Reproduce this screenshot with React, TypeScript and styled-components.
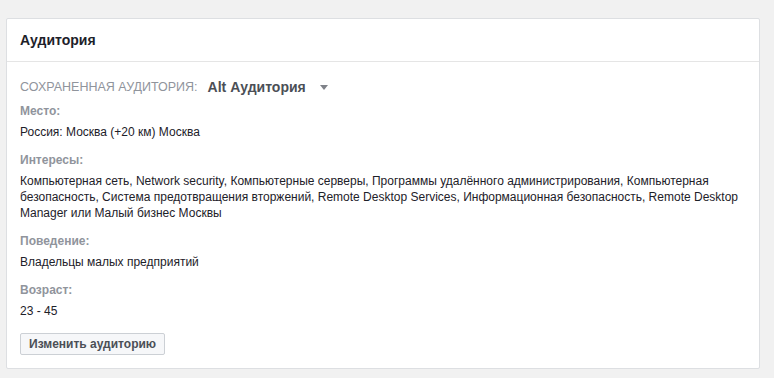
import React from "react";
import styled, { createGlobalStyle } from "styled-components";

const Global = createGlobalStyle`
  html, body { margin: 0; padding: 0; background: #f1f1f1; }
  body { font-family: "Liberation Sans", Arial, Helvetica, sans-serif; -webkit-font-smoothing: antialiased; }
`;

const Page = styled.div`
  padding: 18px 14px 12px 6px;
  width: 774px;
  box-sizing: border-box;
`;

const Card = styled.section`
  background: #fff;
  border: 1px solid #dddfe2;
  border-radius: 2px;
  box-sizing: border-box;
`;

const Header = styled.header`
  height: 42px;
  display: flex;
  align-items: center;
  padding: 0 13px;
  border-bottom: 1px solid #e5e5e5;
  font-size: 14px;
  font-weight: bold;
  color: #1d2129;
`;

const Body = styled.div`
  padding: 15px 13px 13px;
  display: flex;
  flex-direction: column;
`;

const SavedRow = styled.div`
  display: flex;
  align-items: center;
  height: 20px;
  margin-bottom: 6px;
`;

const SavedLabel = styled.span`
  font-size: 12.5px;
  color: #90949c;
  text-transform: uppercase;
  margin-right: 10px;
`;

const SavedValue = styled.span`
  font-size: 14px;
  font-weight: bold;
  color: #4b4f56;
`;

const Caret = styled.span`
  width: 0;
  height: 0;
  border-left: 4px solid transparent;
  border-right: 4px solid transparent;
  border-top: 5px solid #7f8289;
  margin-left: 14px;
  margin-top: 1px;
`;

const Section = styled.div`
  margin-bottom: 12px;
`;

const Label = styled.div`
  font-size: 12px;
  font-weight: bold;
  color: #90949c;
  line-height: 16px;
  margin-bottom: 5px;
`;

const Value = styled.div`
  font-size: 12px;
  color: #1d2129;
  line-height: 16px;
`;

const Button = styled.button`
  align-self: flex-start;
  margin-top: 2px;
  height: 22px;
  padding: 0 8px;
  border: 1px solid #ccd0d5;
  border-radius: 2px;
  background: #f6f7f9;
  font-family: inherit;
  font-size: 12px;
  font-weight: bold;
  color: #4b4f56;
  cursor: pointer;
`;

const sections = [
  { label: "Место:", value: "Россия: Москва (+20 км) Москва" },
  {
    label: "Интересы:",
    value:
      "Компьютерная сеть, Network security, Компьютерные серверы, Программы удалённого администрирования, Компьютерная безопасность, Система предотвращения вторжений, Remote Desktop Services, Информационная безопасность, Remote Desktop Manager или Малый бизнес Москвы",
  },
  { label: "Поведение:", value: "Владельцы малых предприятий" },
  { label: "Возраст:", value: "23 - 45" },
];

export default function App() {
  return (
    <>
      <Global />
      <Page>
        <Card>
          <Header>Аудитория</Header>
          <Body>
            <SavedRow>
              <SavedLabel>Сохраненная аудитория:</SavedLabel>
              <SavedValue>Alt Аудитория</SavedValue>
              <Caret />
            </SavedRow>
            {sections.map((s) => (
              <Section key={s.label}>
                <Label>{s.label}</Label>
                <Value>{s.value}</Value>
              </Section>
            ))}
            <Button>Изменить аудиторию</Button>
          </Body>
        </Card>
      </Page>
    </>
  );
}
